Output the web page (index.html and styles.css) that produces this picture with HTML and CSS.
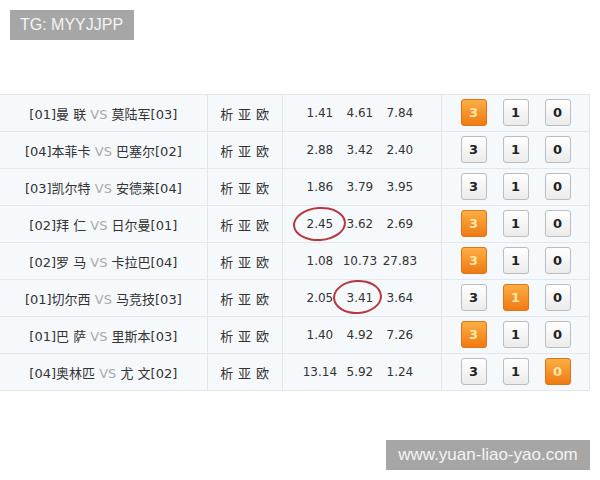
FILE: index.html
```html
<html><head>
  <meta charset="UTF-8">
  <meta name="viewport" content="width=device-width, initial-scale=1.0">
  <title>竞彩足球 胜平负</title>
  <link rel="stylesheet" href="styles.css">
</head>
<body>
  <div class="tag">TG: MYYJJPP</div>

  <table class="match-table">
    <tbody>
      <tr>
        <td class="teams">[01]曼&nbsp;联 <span class="vs">VS</span> 莫陆军[03]</td>
        <td class="links">析 亚 欧</td>
        <td class="odds"><div class="odds-row"><span>1.41</span><span>4.61</span><span>7.84</span></div></td>
        <td class="picks"><div class="pick-row"><span class="pick on">3</span><span class="pick">1</span><span class="pick">0</span></div></td>
      </tr>
      <tr>
        <td class="teams">[04]本菲卡 <span class="vs">VS</span> 巴塞尔[02]</td>
        <td class="links">析 亚 欧</td>
        <td class="odds"><div class="odds-row"><span>2.88</span><span>3.42</span><span>2.40</span></div></td>
        <td class="picks"><div class="pick-row"><span class="pick">3</span><span class="pick">1</span><span class="pick">0</span></div></td>
      </tr>
      <tr>
        <td class="teams">[03]凯尔特 <span class="vs">VS</span> 安德莱[04]</td>
        <td class="links">析 亚 欧</td>
        <td class="odds"><div class="odds-row"><span>1.86</span><span>3.79</span><span>3.95</span></div></td>
        <td class="picks"><div class="pick-row"><span class="pick">3</span><span class="pick">1</span><span class="pick">0</span></div></td>
      </tr>
      <tr>
        <td class="teams">[02]拜&nbsp;仁 <span class="vs">VS</span> 日尔曼[01]</td>
        <td class="links">析 亚 欧</td>
        <td class="odds"><div class="odds-row"><span class="marked">2.45<i class="ring ring-a"></i></span><span>3.62</span><span>2.69</span></div></td>
        <td class="picks"><div class="pick-row"><span class="pick on">3</span><span class="pick">1</span><span class="pick">0</span></div></td>
      </tr>
      <tr>
        <td class="teams">[02]罗&nbsp;马 <span class="vs">VS</span> 卡拉巴[04]</td>
        <td class="links">析 亚 欧</td>
        <td class="odds"><div class="odds-row"><span>1.08</span><span>10.73</span><span>27.83</span></div></td>
        <td class="picks"><div class="pick-row"><span class="pick on">3</span><span class="pick">1</span><span class="pick">0</span></div></td>
      </tr>
      <tr>
        <td class="teams">[01]切尔西 <span class="vs">VS</span> 马竞技[03]</td>
        <td class="links">析 亚 欧</td>
        <td class="odds"><div class="odds-row"><span>2.05</span><span class="marked">3.41<i class="ring ring-b"></i></span><span>3.64</span></div></td>
        <td class="picks"><div class="pick-row"><span class="pick">3</span><span class="pick on">1</span><span class="pick">0</span></div></td>
      </tr>
      <tr>
        <td class="teams">[01]巴&nbsp;萨 <span class="vs">VS</span> 里斯本[03]</td>
        <td class="links">析 亚 欧</td>
        <td class="odds"><div class="odds-row"><span>1.40</span><span>4.92</span><span>7.26</span></div></td>
        <td class="picks"><div class="pick-row"><span class="pick on">3</span><span class="pick">1</span><span class="pick">0</span></div></td>
      </tr>
      <tr>
        <td class="teams">[04]奥林匹 <span class="vs">VS</span> 尤&nbsp;文[02]</td>
        <td class="links">析 亚 欧</td>
        <td class="odds"><div class="odds-row"><span>13.14</span><span>5.92</span><span>1.24</span></div></td>
        <td class="picks"><div class="pick-row"><span class="pick">3</span><span class="pick">1</span><span class="pick on">0</span></div></td>
      </tr>
    </tbody>
  </table>

  <div class="site">www.yuan-liao-yao.com</div>
</body>
</html>
```

FILE: styles.css
```css
:root {
  --cell-bg: #f6f9fc;
  --line-color: #e1e7ed;
  --text-color: #333;
  --orange-top: #fbae45;
  --orange-bottom: #f07a12;
  --label-bg: #a6a6a6;
}

body {
  margin: 0;
  padding: 0;
  background-color: white;
  color: var(--text-color);
  font-family: "DejaVu Sans", "Noto Sans CJK SC", sans-serif;
}

.tag {
  position: absolute;
  left: 10px;
  top: 10px;
  height: 30px;
  line-height: 30px;
  padding: 0 11px 0 10px;
  background-color: var(--label-bg);
  color: #f4f4f4;
  font-family: "Liberation Sans", Arial, sans-serif;
  font-size: 16px;
}

.match-table {
  margin-top: 94px;
  width: 590px;
  border-collapse: collapse;
  background-color: var(--cell-bg);
}

.match-table td {
  height: 37px;
  padding: 0;
  border: 1px solid var(--line-color);
  text-align: center;
  white-space: nowrap;
}

.match-table td:first-child {
  border-left: none;
}

.teams {
  width: 207px;
  font-size: 13px;
  font-family: "DejaVu Sans", "Noto Sans CJK SC", sans-serif;
}

.vs {
  color: #aaa;
}

.links {
  width: 74px;
  font-size: 13px;
  font-family: "Noto Sans CJK SC", sans-serif;
  word-spacing: 2px;
}

.odds {
  width: 159px;
  font-size: 12px;
}

.odds-row {
  display: flex;
  justify-content: center;
  margin-left: -4px;
}

.odds-row span {
  width: 40px;
  text-align: center;
}

.marked {
  position: relative;
}

.ring {
  position: absolute;
  border: 2px solid #b8363d;
  border-radius: 50%;
}

.ring-a {
  left: -7px;
  top: -10px;
  width: 49px;
  height: 30px;
  transform: rotate(-4deg);
}

.ring-b {
  left: -7px;
  top: -11px;
  width: 45px;
  height: 30px;
  transform: rotate(-3deg);
}

.picks {
  width: 147px;
}

.pick-row {
  display: flex;
  justify-content: center;
  gap: 16px;
  margin-top: -1px;
}

.pick {
  box-sizing: border-box;
  width: 26px;
  height: 27px;
  line-height: 25px;
  border: 1px solid #bcbcbc;
  border-radius: 3px;
  background: linear-gradient(#ffffff, #ebebeb);
  color: #222;
  font-size: 13px;
  font-weight: bold;
}

.pick.on {
  border-color: #e07418;
  background: linear-gradient(var(--orange-top), var(--orange-bottom));
  color: #fde7a8;
}

.site {
  position: absolute;
  left: 386px;
  top: 440px;
  width: 204px;
  height: 30px;
  line-height: 30px;
  text-align: center;
  background-color: var(--label-bg);
  color: #f4f4f4;
  font-family: "Liberation Sans", Arial, sans-serif;
  font-size: 17px;
}
```
